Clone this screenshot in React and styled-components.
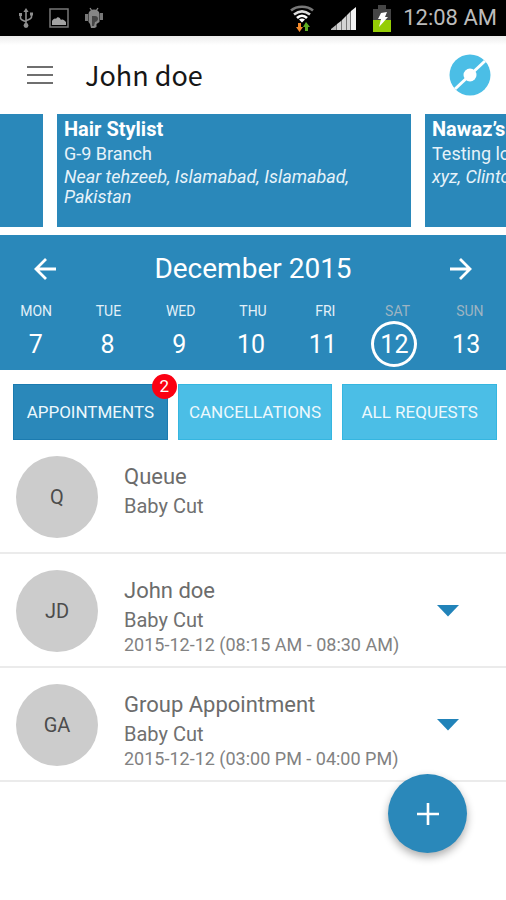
import React, { useState } from "react";
import styled, { createGlobalStyle } from "styled-components";

const blue = "#2a88ba";
const sky = "#4bbee6";

const GlobalStyle = createGlobalStyle`
  *, *::before, *::after { box-sizing: border-box; }
  body { margin: 0; background: #fff; font-family: Roboto, sans-serif; }
  h1, h2, p, ul { margin: 0; padding: 0; }
`;

const BaseButton = styled.button`
  padding: 0;
  border: 0;
  background: none;
  font-family: inherit;
  cursor: pointer;
`;

const Page = styled.div`
  position: relative;
  min-height: 100vh;
  overflow: hidden;
  background: #fff;
`;

const StatusBar = styled.div`
  display: flex;
  align-items: center;
  justify-content: space-between;
  height: 36px;
  padding: 0 9px 0 18px;
  background: #000;
`;

const StatusGroup = styled.div`
  display: flex;
  align-items: center;
  gap: ${(p) => p.$gap}px;
`;

const Clock = styled.time`
  margin-left: -4px;
  color: #bcbcbc;
  font-size: 22px;
  line-height: 38px;
`;

const Header = styled.header`
  display: flex;
  align-items: center;
  height: 78px;
  padding: 0 15px 0 24px;
  background: linear-gradient(#ececec, #fff 9px);
`;

const IconButton = styled(BaseButton)`
  display: flex;
  align-items: center;
  justify-content: center;
  width: ${(p) => p.$size}px;
  height: ${(p) => p.$size}px;
`;

const Title = styled.h1`
  flex: 1;
  margin-left: 29px;
  color: #161616;
  font-family: "Noto Sans CJK SC", "Noto Sans", sans-serif;
  font-size: 27px;
  font-weight: 400;
  line-height: 40px;
`;

const Carousel = styled.section`
  display: flex;
  justify-content: center;
  gap: 14px;
  padding-right: 38px;
  overflow: hidden;
`;

const Card = styled.article`
  flex: 0 0 calc(100% - 114px);
  min-height: 113px;
  padding: 3px 7px;
  background: ${blue};
  color: #e6f2f9;
`;

const CardName = styled.h2`
  color: #fff;
  font-size: 20px;
  font-weight: 700;
  line-height: 24px;
`;

const CardBranch = styled.p`
  font-size: 18px;
  line-height: 26px;
`;

const CardAddress = styled.p`
  max-width: 300px;
  font-size: 18px;
  font-style: italic;
  line-height: 20px;
`;

const Calendar = styled.section`
  margin-top: 8px;
  padding-bottom: 3px;
  background: ${blue};
  color: #fff;
`;

const MonthBar = styled.div`
  display: flex;
  align-items: center;
  justify-content: space-between;
  height: 67px;
  padding: 0 25px;
`;

const MonthName = styled.h2`
  font-size: 28px;
  font-weight: 400;
`;

const WeekRow = styled.div`
  display: grid;
  grid-template-columns: repeat(7, 1fr);
  justify-items: center;
  padding-right: ${(p) => p.$inset || 0}px;
`;

const Weekday = styled.span`
  color: ${(p) => (p.$dim ? "#9db4c2" : "#e3f0f8")};
  font-size: 14px;
  line-height: 19px;
`;

const DateButton = styled(BaseButton)`
  width: 46px;
  height: 46px;
  border-radius: 50%;
  box-shadow: ${(p) => (p.$selected ? "inset 0 0 0 3px #fff" : "none")};
  color: #fff;
  font-size: 25px;
`;

const Tabs = styled.nav`
  display: grid;
  grid-template-columns: repeat(3, 1fr);
  gap: 10px;
  padding: 14px 9px 0 13px;
`;

const Tab = styled(BaseButton)`
  position: relative;
  height: 56px;
  background: ${(p) => (p.$active ? blue : sky)};
  box-shadow: inset 0 0 0 1px ${(p) => (p.$active ? "#1b7bb0" : "#35b6e0")};
  color: #edf8fd;
  font-size: 17px;
  white-space: nowrap;
`;

const Badge = styled.span`
  position: absolute;
  top: -10px;
  right: -9px;
  width: 25px;
  height: 25px;
  border-radius: 50%;
  background: #fb0012;
  color: #fff;
  font-size: 17px;
  line-height: 25px;
`;

const List = styled.ul`
  list-style: none;
`;

const Row = styled.li`
  display: flex;
  align-items: flex-start;
  min-height: 114px;
  padding: 16px 36px 6px 16px;
  border-bottom: 2px solid #ebebeb;
`;

const Avatar = styled.div`
  flex: none;
  width: 82px;
  height: 82px;
  border-radius: 50%;
  background: #ccc;
  color: #4c4c4c;
  font-size: 20px;
  line-height: 82px;
  text-align: center;
`;

const Details = styled.div`
  flex: 1;
  padding: 6px 0 0 26px;
`;

const Client = styled.p`
  color: #6c6c6c;
  font-size: 22px;
  line-height: 30px;
`;

const Service = styled.p`
  color: #707070;
  font-size: 20px;
  line-height: 28px;
`;

const Slot = styled.p`
  color: #828282;
  font-size: 18px;
  line-height: 22px;
  white-space: nowrap;
`;

const Expand = styled(IconButton)`
  margin-top: 19px;
`;

const AddButton = styled(BaseButton)`
  position: fixed;
  right: 39px;
  bottom: 47px;
  display: flex;
  align-items: center;
  justify-content: center;
  width: 79px;
  height: 79px;
  border-radius: 50%;
  background: ${blue};
  box-shadow: 0 4px 8px rgba(0, 0, 0, 0.32);
`;

const UsbIcon = () => (
  <svg width="16" height="20" viewBox="0 0 16 20" fill="none" stroke="#8e8e8e" strokeWidth="1.6">
    <path d="M8 3v14M2.5 6v4c0 2 3 2.5 5.5 4M13.5 6v3c0 2-3 2.5-5.5 4" />
    <path d="M8 0l2.6 4H5.4zM1 5h3v3H1zM12 4.500h3v3h-3z" fill="#8e8e8e" stroke="none" />
    <circle cx="8" cy="17.500" r="2.400" fill="#8e8e8e" stroke="none" />
  </svg>
);

const PictureIcon = () => (
  <svg width="20" height="20" viewBox="0 0 20 20">
    <rect x="1" y="1" width="18" height="18" fill="none" stroke="#777" strokeWidth="1.500" />
    <path d="M3 17v-4c1-2 3-3 4-2 1-3 4-2 5 1 2-1 3 0 5 2v3z" fill="#a2a2a2" />
  </svg>
);

const DebugIcon = () => (
  <svg width="20" height="22" viewBox="0 0 20 22">
    <path d="M6 1l2 3M14 1l-2 3" stroke="#8a8a8a" strokeWidth="1.300" />
    <path d="M4.500 7a5.500 4.500 0 0 1 11 0v8l-3 2v3l-2 1H7l-1-4-1.500-2z" fill="#858585" />
    <path d="M1 7h3v7H1zM16 6h3v7h-3z" fill="#777" />
    <path d="M8 19V9h3c4 0 4 5 0 6l-1 4z" fill="#444" />
  </svg>
);

const WifiIcon = () => (
  <svg width="26" height="28" viewBox="0 0 26 28" fill="none">
    <path d="M2 6.500c6-5 16-5 22 0" stroke="#777" strokeWidth="2.600" />
    <path d="M5 10.500c5-4 11-4 16 0" stroke="#ddd" strokeWidth="2.600" />
    <path d="M8 14c3-3 7-3 10 0" stroke="#fff" strokeWidth="2.600" />
    <path d="M10 15.500c2-1.500 4-1.500 6 0l-3 3z" fill="#fff" />
    <path d="M9 19h3v4h2l-3.500 5L7 23h2z" fill="#f28a2c" />
    <path d="M16 27v-4h-2l3-5 4 5h-2v4z" fill="#5fae22" />
  </svg>
);

const SignalIcon = () => (
  <svg width="26" height="24" viewBox="0 0 26 24">
    <path d="M0 24v-1l5-4v5z" fill="#bbb" />
    <path d="M6 24v-6l4-3v9zM11 24V14l4-4v14zM16 24V9l3-3v18z" fill="#d4d4d4" />
    <path d="M5 24v-5l1-1v6zM10 24v-9l1-1v10zM15 24V10l1-1v15zM19 24V6l1-1v19z" fill="#777" />
    <path d="M20 24V5l5-4v23z" fill="#f4f4f4" />
  </svg>
);

const BatteryIcon = () => (
  <svg width="18" height="27" viewBox="0 0 18 27">
    <path d="M5 0h8v4h5v11H0V4h5z" fill="#454545" />
    <path d="M0 15h18v12H0z" fill="#95cd05" />
    <path d="M8 8l6-1-2 5h3L6 22l2-8H5z" fill="#fff" />
  </svg>
);

const MenuIcon = () => (
  <svg width="28" height="20" viewBox="0 0 28 20" stroke="#6f6f6f" strokeWidth="2">
    <path d="M1 2h26M1 10h26M1 18h26" />
  </svg>
);

const LogoIcon = () => (
  <svg width="42" height="42" viewBox="0 0 42 42">
    <circle cx="21" cy="21" r="20.500" fill={sky} />
    <path d="M6 35L36 7" stroke="#fff" strokeWidth="3" />
    <circle cx="21" cy="21" r="6.500" fill="#fff" />
  </svg>
);

const ArrowIcon = ({ d }) => (
  <svg width="24" height="24" viewBox="0 0 24 24" fill="none" stroke="#fff" strokeWidth="2.800">
    <path d={d} />
  </svg>
);

const CaretIcon = () => (
  <svg width="22" height="12" viewBox="0 0 22 12">
    <path d="M0 0h22L11 11.500z" fill="#2183b9" />
  </svg>
);

const PlusIcon = () => (
  <svg width="22" height="22" viewBox="0 0 22 22" stroke="#fff" strokeWidth="2.600">
    <path d="M11 0v22M0 11h22" />
  </svg>
);

const weekdays = ["MON", "TUE", "WED", "THU", "FRI", "SAT", "SUN"];
const dates = [7, 8, 9, 10, 11, 12, 13];
const tabs = ["APPOINTMENTS", "CANCELLATIONS", "ALL REQUESTS"];
const appointments = [
  { initials: "Q", client: "Queue", service: "Baby Cut" },
  { initials: "JD", client: "John doe", service: "Baby Cut", slot: "2015-12-12 (08:15 AM - 08:30 AM)" },
  { initials: "GA", client: "Group Appointment", service: "Baby Cut", slot: "2015-12-12 (03:00 PM - 04:00 PM)" },
];

export default function App() {
  const [selected, setSelected] = useState(12);
  const [tab, setTab] = useState(tabs[0]);

  return (
    <Page>
      <GlobalStyle />
      <StatusBar>
        <StatusGroup $gap={15}>
          <UsbIcon />
          <PictureIcon />
          <DebugIcon />
        </StatusGroup>
        <StatusGroup $gap={16}>
          <WifiIcon />
          <SignalIcon />
          <BatteryIcon />
          <Clock>12:08 AM</Clock>
        </StatusGroup>
      </StatusBar>
      <Header>
        <IconButton $size={32} aria-label="Menu"><MenuIcon /></IconButton>
        <Title>John doe</Title>
        <IconButton $size={42} aria-label="Home"><LogoIcon /></IconButton>
      </Header>
      <main>
        <Carousel aria-label="Branches">
          <Card />
          <Card>
            <CardName>Hair Stylist</CardName>
            <CardBranch>G-9 Branch</CardBranch>
            <CardAddress>Near tehzeeb, Islamabad, Islamabad, Pakistan</CardAddress>
          </Card>
          <Card>
            <CardName>Nawaz’s</CardName>
            <CardBranch>Testing lo</CardBranch>
            <CardAddress>xyz, Clinto</CardAddress>
          </Card>
        </Carousel>
        <Calendar>
          <MonthBar>
            <IconButton $size={40} aria-label="Previous week"><ArrowIcon d="M23 12H3M13 2L3 12l10 10" /></IconButton>
            <MonthName>December 2015</MonthName>
            <IconButton $size={40} aria-label="Next week"><ArrowIcon d="M1 12h20M11 2l10 10-10 10" /></IconButton>
          </MonthBar>
          <WeekRow>
            {weekdays.map((day, i) => <Weekday key={day} $dim={i > 4}>{day}</Weekday>)}
          </WeekRow>
          <WeekRow $inset={4}>
            {dates.map((date) => (
              <DateButton
                key={date}
                $selected={date === selected}
                aria-pressed={date === selected}
                onClick={() => setSelected(date)}
              >
                {date}
              </DateButton>
            ))}
          </WeekRow>
        </Calendar>
        <Tabs>
          {tabs.map((name, i) => (
            <Tab key={name} $active={name === tab} onClick={() => setTab(name)}>
              {name}
              {i === 0 && <Badge>2</Badge>}
            </Tab>
          ))}
        </Tabs>
        <List>
          {appointments.map((item) => (
            <Row key={item.initials}>
              <Avatar>{item.initials}</Avatar>
              <Details>
                <Client>{item.client}</Client>
                <Service>{item.service}</Service>
                {item.slot && <Slot>{item.slot}</Slot>}
              </Details>
              {item.slot && <Expand $size={44} aria-label={`Show ${item.client}`}><CaretIcon /></Expand>}
            </Row>
          ))}
        </List>
      </main>
      <AddButton aria-label="Add appointment"><PlusIcon /></AddButton>
    </Page>
  );
}
